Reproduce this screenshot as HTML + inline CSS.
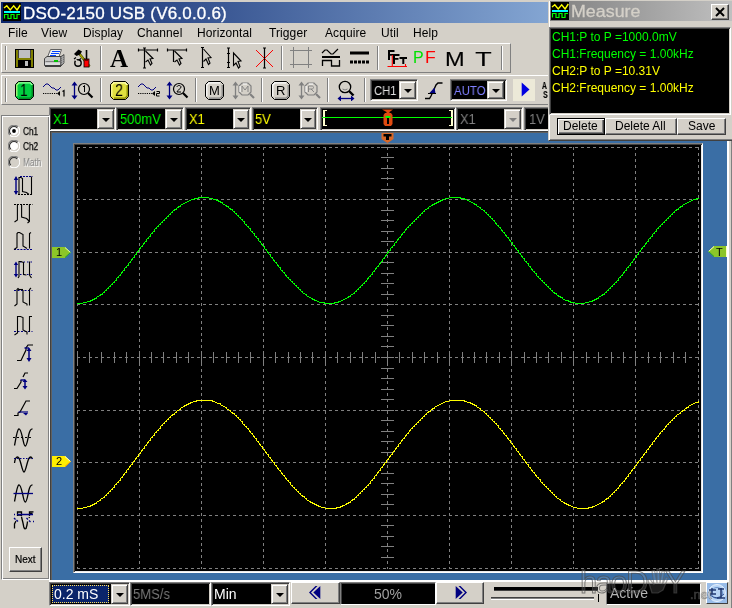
<!DOCTYPE html>
<html><head><meta charset="utf-8">
<style>
*{margin:0;padding:0;box-sizing:border-box}
html,body{width:732px;height:608px;overflow:hidden;background:#d4d0c8;font-family:"Liberation Sans",sans-serif;position:relative}
.a{position:absolute}
.t{position:absolute;white-space:pre;line-height:1;will-change:transform}
.raised{border-top:1px solid #fff;border-left:1px solid #fff;border-right:1px solid #808080;border-bottom:1px solid #808080}
.sunk{border-top:1px solid #808080;border-left:1px solid #808080;border-right:1px solid #fff;border-bottom:1px solid #fff}
.btn{position:absolute;background:#d4d0c8;border-top:1px solid #fff;border-left:1px solid #fff;border-right:1px solid #404040;border-bottom:1px solid #404040;box-shadow:inset -1px -1px 0 #808080}
.combo{position:absolute;background:#000;border-top:1px solid #808080;border-left:1px solid #808080;border-right:1px solid #fff;border-bottom:1px solid #fff;box-shadow:inset 1px 1px 0 #404040,inset -1px -1px 0 #d4d0c8}
.dd{position:absolute;background:#d4d0c8;border-top:1px solid #d4d0c8;border-left:1px solid #d4d0c8;border-right:1px solid #404040;border-bottom:1px solid #404040;box-shadow:inset 1px 1px 0 #fff,inset -1px -1px 0 #808080}
.dd:after{content:"";position:absolute;left:50%;top:50%;margin-left:-4px;margin-top:-1px;border-left:4px solid transparent;border-right:4px solid transparent;border-top:4px solid #000}
.dd.dis:after{border-top-color:#808080}
.sep{position:absolute;width:2px;border-left:1px solid #808080;border-right:1px solid #fff}
.grip{position:absolute;width:2px;border-left:1px solid #808080;border-right:1px solid #fff}
</style></head><body>

<!-- main window title -->
<div class="a" style="left:1px;top:2px;width:731px;height:21px;background:linear-gradient(to right,#0a246a 0px,#a6caf0 702px)"></div>
<svg class="a" style="left:3px;top:3px" width="18" height="18" viewBox="0 0 18 18">
<rect width="18" height="18" fill="#000"/>
<polyline points="1,5 3.8,2.8 7.2,7 10.7,2.8 14.1,7 17.3,2" fill="none" stroke="#ff0" stroke-width="1.4"/>
<rect x="1" y="8" width="16" height="2" fill="#0ff"/>
<polyline points="1.5,15.5 1.5,11.5 5,11.5 5,15.5 8,15.5 8,11.5 11,11.5 11,15.5 14,15.5 14,11.5 17,11.5" fill="none" stroke="#0f0" stroke-width="1.2"/>
</svg>
<div class="t" style="left:23px;top:5px;font-size:17px;letter-spacing:0.2px;color:#fff;-webkit-text-stroke:0.3px #fff">DSO-2150 USB (V6.0.0.6)</div>

<!-- menu -->
<div class="t" style="left:8px;top:27px;font-size:12px;letter-spacing:0.1px">File</div>
<div class="t" style="left:41px;top:27px;font-size:12px;letter-spacing:0.1px">View</div>
<div class="t" style="left:83px;top:27px;font-size:12px;letter-spacing:0.1px">Display</div>
<div class="t" style="left:137px;top:27px;font-size:12px;letter-spacing:0.1px">Channel</div>
<div class="t" style="left:197px;top:27px;font-size:12px;letter-spacing:0.1px">Horizontal</div>
<div class="t" style="left:269px;top:27px;font-size:12px;letter-spacing:0.1px">Trigger</div>
<div class="t" style="left:325px;top:27px;font-size:12px;letter-spacing:0.1px">Acquire</div>
<div class="t" style="left:381px;top:27px;font-size:12px;letter-spacing:0.1px">Util</div>
<div class="t" style="left:413px;top:27px;font-size:12px;letter-spacing:0.1px">Help</div>

<!-- toolbar 1 -->
<div class="a raised" style="left:1px;top:43px;width:510px;height:30px"></div>
<div class="grip" style="left:5px;top:46px;height:24px"></div>
<!-- floppy -->
<svg class="a" style="left:15px;top:49px" width="19" height="19" viewBox="0 0 19 19">
<rect x="0.5" y="0.5" width="18" height="18" fill="#808000" stroke="#000"/>
<rect x="3" y="1" width="13" height="8" fill="#c0c0c0"/>
<path d="M3.5 1V9M15.5 1V9" stroke="#404040" stroke-width="1"/>
<rect x="3" y="11" width="13" height="7" fill="#000"/>
<rect x="10" y="12" width="3" height="5" fill="#c0c0c0"/>
</svg>
<!-- printer -->
<svg class="a" style="left:44px;top:49px" width="21" height="19" viewBox="0 0 21 19">
<path d="M6.5 0.5H17.5L15 8H3.5Z" fill="#f0f0f0" stroke="#606060"/>
<path d="M8 2.5H16M7 4.5H15M6 6.5H12" stroke="#0040ff" stroke-width="1.2"/>
<path d="M0.5 9.5L3 7.5H17V16.5H0.5Z" fill="#c8c8c8" stroke="#404040"/>
<path d="M17 7.5L20 5.5V14L17 17Z" fill="#909090" stroke="#404040" stroke-width="0.8"/>
<path d="M18 8V15M19 7V14" stroke="#c0c0c0" stroke-dasharray="1 1" stroke-width="0.8"/>
<path d="M1.5 12.5H16" stroke="#808080"/>
<rect x="10" y="11" width="4" height="2" fill="#00c000"/>
<path d="M1 15H16" stroke="#f0f0f0" stroke-width="1"/>
<path d="M1 17.5H17" stroke="#404040" stroke-width="1"/>
</svg>
<!-- tools -->
<svg class="a" style="left:73px;top:48px" width="19" height="20" viewBox="0 0 19 20">
<path d="M5 4L16.5 18.5" stroke="#404000" stroke-width="2.6"/>
<path d="M5 4L16.5 18.5" stroke="#a8a800" stroke-width="1.4"/>
<path d="M1 6L5.5 1.5L9 3.5L7 6.5L3.5 8Z" fill="#000"/>
<circle cx="5" cy="15" r="3.2" fill="none" stroke="#000" stroke-width="1.4"/>
<path d="M2 11L4.5 14" stroke="#d4d0c8" stroke-width="1.6"/>
<path d="M1 11L3 9.5M6 12L8 10.5" stroke="#000" stroke-width="1.2"/>
<path d="M13.5 2V11" stroke="#000" stroke-width="1.6"/>
<rect x="11" y="11" width="5" height="8" fill="#ff0000" stroke="#000" stroke-width="0.8"/>
<path d="M12 12H15" stroke="#000" stroke-width="1"/>
</svg>
<div class="sep" style="left:100px;top:46px;height:24px"></div>
<!-- A -->
<div class="t" style="left:110px;top:46px;font-family:'Liberation Serif',serif;font-weight:bold;font-size:25px">A</div>
<!-- T cursor 1 -->
<svg class="a" style="left:137px;top:47px" width="22" height="22" viewBox="0 0 22 22">
<path d="M1 3H21M1.5 1.5V4.5M20.5 1.5V4.5M7.5 1V21M6 21H9M6 1H9" stroke="#000" stroke-width="1.2" fill="none"/>
<path d="M8.5 4L16 11.5L13 12L15 16.5L13.5 18L11 13L8.5 15" stroke="#000" stroke-width="1.1" fill="none"/>
</svg>
<!-- T cursor 2 -->
<svg class="a" style="left:166px;top:47px" width="22" height="22" viewBox="0 0 22 22">
<path d="M1 3H21M1.5 1.5V4.5M20.5 1.5V4.5M7.5 3V15" stroke="#000" stroke-width="1.2" fill="none"/>
<path d="M8.5 4L16 11.5L13 12L15 16.5L13.5 18L11 13L8.5 15" stroke="#000" stroke-width="1.1" fill="none"/>
</svg>
<!-- cursor 3 -->
<svg class="a" style="left:199px;top:47px" width="16" height="22" viewBox="0 0 16 22">
<path d="M3.5 0.5V20.5M2 0.5H5M2 20.5H5" stroke="#000" stroke-width="1.2" fill="none"/>
<path d="M4.5 2L12 10.5L9 11L11 16L9.5 17.5L7 12L4.5 14.5" stroke="#000" stroke-width="1.1" fill="none"/>
</svg>
<!-- cursor 4 -->
<svg class="a" style="left:225px;top:47px" width="20" height="23" viewBox="0 0 20 23">
<path d="M3.5 1V20.5M2 1H5M2 20.5H5M2 6.5H5M2 15.5H5" stroke="#000" stroke-width="1.2" fill="none"/>
<path d="M8.5 6L16 14L13 14.5L15 19.5L13.5 21L11 16L8.5 18.5Z" stroke="#000" stroke-width="1.1" fill="none"/>
</svg>
<!-- red X -->
<svg class="a" style="left:255px;top:47px" width="20" height="22" viewBox="0 0 20 22">
<path d="M1 3L18 20M18 3L1 20" stroke="#ff0000" stroke-width="1"/>
<path d="M9.5 1V21M8 1H11M8 21H11" stroke="#000" stroke-width="1.2"/>
</svg>
<div class="sep" style="left:281px;top:46px;height:24px"></div>
<!-- grid -->
<svg class="a" style="left:289px;top:47px" width="24" height="22" viewBox="0 0 24 22">
<path d="M1 3.5H23M1 17.5H23M4.5 0V21M19.5 0V21" stroke="#808080" stroke-width="1"/>
</svg>
<!-- wave+square -->
<svg class="a" style="left:321px;top:47px" width="20" height="22" viewBox="0 0 20 22">
<path d="M1 6L4 3H6L10 7H12L17 2" stroke="#000" stroke-width="1.2" fill="none"/>
<path d="M1 10H19" stroke="#000" stroke-width="2"/>
<path d="M1.5 19V13.5H10.5V19H18.5V13" stroke="#000" stroke-width="1.3" fill="none"/>
</svg>
<!-- lines -->
<svg class="a" style="left:349px;top:47px" width="21" height="22" viewBox="0 0 21 22">
<rect x="1" y="4.5" width="19" height="3" fill="#000"/>
<rect x="1" y="13.5" width="3" height="3" fill="#000"/><rect x="5" y="13.5" width="3" height="3" fill="#000"/><rect x="9" y="13.5" width="3" height="3" fill="#000"/><rect x="13" y="13.5" width="3" height="3" fill="#000"/><rect x="17" y="13.5" width="3" height="3" fill="#000"/>
</svg>
<div class="sep" style="left:377px;top:46px;height:24px"></div>
<!-- FFT -->
<svg class="a" style="left:386px;top:47px" width="22" height="22" viewBox="0 0 22 22">
<path d="M2 3H8.5V5H4V7H7.5V8.8H4V13H2Z" fill="#000"/>
<path d="M7 7H13.5V9H9V11H12.5V12.8H9V17H7Z" fill="#000"/>
<path d="M13.5 10H21V12H18.3V17H16.3V12H13.5Z" fill="#000"/>
<path d="M1.5 19.5H21M6.3 8V19.5M19.5 17V19.5" stroke="#ff0000" stroke-width="1.1"/>
</svg>
<div class="t" style="left:413px;top:50px;font-size:16px;color:#00e000">P</div>
<div class="t" style="left:425px;top:50px;font-size:16px;color:#ff0000;transform:scaleX(1.1);transform-origin:0 0">F</div>
<div class="t" style="left:445px;top:49px;font-size:20px;-webkit-text-stroke:0.15px #000;transform:scaleX(1.18);transform-origin:0 0">M</div>
<div class="t" style="left:475px;top:49px;font-size:20px;transform:scaleX(1.38);transform-origin:0 0">T</div>
<div class="sep" style="left:501px;top:46px;height:24px"></div>

<!-- toolbar 2 -->
<div class="a raised" style="left:1px;top:75px;width:731px;height:30px"></div>
<div class="grip" style="left:5px;top:78px;height:24px"></div>
<!-- 1 green -->
<svg class="a" style="left:15px;top:81px" width="20" height="20" viewBox="0 0 20 20">
<path d="M3.5 0.5H15.5L18.5 3.5V15.5L15.5 18.5H3.5L0.5 15.5V3.5Z" fill="#00d040" stroke="#000"/>
<path d="M3.5 1.8H15L17.2 4" stroke="#a0ffa0" stroke-width="1.2" fill="none"/>
<path d="M1.8 15V4L4 1.8" stroke="#c0ff80" stroke-width="1.2" fill="none"/>
<path d="M17.2 4V15L15 17.2H4" stroke="#008020" stroke-width="1.2" fill="none"/>
</svg>
<div class="t" style="left:20px;top:83px;font-size:16px;transform:scaleX(0.85);transform-origin:0 0">1</div>
<!-- wave1 -->
<svg class="a" style="left:42px;top:82px" width="24" height="16" viewBox="0 0 24 16">
<path d="M1 5L4 2H6L10 6H12L14 8H16L19 5" stroke="#000080" stroke-width="1" fill="none"/>
<path d="M1 11.5H15" stroke="#000" stroke-dasharray="1.2 1" stroke-width="1"/>
<path d="M15 11.5L18 9V14Z" fill="#000"/>
<path d="M20.5 9.5L22 8.5V14.5" stroke="#000" stroke-width="1.2" fill="none"/>
</svg>
<!-- zoom1 -->
<svg class="a" style="left:71px;top:81px" width="24" height="20" viewBox="0 0 24 20">
<path d="M3.5 2V17" stroke="#000080" stroke-width="1.3"/>
<path d="M0.5 4.5L3.5 0.5L6.5 4.5ZM0.5 14.5L3.5 18.5L6.5 14.5Z" fill="#000080"/>
<circle cx="13" cy="8" r="5.5" fill="none" stroke="#000" stroke-width="1.2"/>
<path d="M17 12L21.5 16.5" stroke="#000" stroke-width="2.2"/>
<path d="M12 6L13.5 4.5V11" stroke="#000" stroke-width="1" fill="none"/>
</svg>
<div class="sep" style="left:100px;top:78px;height:24px"></div>
<!-- 2 yellow -->
<svg class="a" style="left:110px;top:81px" width="20" height="20" viewBox="0 0 20 20">
<path d="M3.5 0.5H15.5L18.5 3.5V15.5L15.5 18.5H3.5L0.5 15.5V3.5Z" fill="#e0e040" stroke="#000"/>
<path d="M3.5 1.8H15L17.2 4" stroke="#ffffc0" stroke-width="1.2" fill="none"/>
<path d="M1.8 15V4L4 1.8" stroke="#ffffa0" stroke-width="1.2" fill="none"/>
<path d="M17.2 4V15L15 17.2H4" stroke="#808000" stroke-width="1.2" fill="none"/>
</svg>
<div class="t" style="left:115px;top:83px;font-size:16px;transform:scaleX(0.9);transform-origin:0 0">2</div>
<!-- wave2 -->
<svg class="a" style="left:137px;top:82px" width="24" height="16" viewBox="0 0 24 16">
<path d="M1 5L4 2H6L10 6H12L14 8H16L19 5" stroke="#000080" stroke-width="1" fill="none"/>
<path d="M1 11.5H15" stroke="#000" stroke-dasharray="1.2 1" stroke-width="1"/>
<path d="M15 11.5L18 9V14Z" fill="#000"/>
<path d="M19.5 9.5H22.5V11.5H19.5V14H22.5" stroke="#000" stroke-width="1" fill="none"/>
</svg>
<!-- zoom2 -->
<svg class="a" style="left:166px;top:81px" width="24" height="20" viewBox="0 0 24 20">
<path d="M3.5 2V17" stroke="#000080" stroke-width="1.3"/>
<path d="M0.5 4.5L3.5 0.5L6.5 4.5ZM0.5 14.5L3.5 18.5L6.5 14.5Z" fill="#000080"/>
<circle cx="13" cy="8" r="5.5" fill="none" stroke="#000" stroke-width="1.2"/>
<path d="M17 12L21.5 16.5" stroke="#000" stroke-width="2.2"/>
<path d="M11 6C11 4 15 4 15 6C15 8 11 9 11 11H15" stroke="#000" stroke-width="1" fill="none"/>
</svg>
<div class="sep" style="left:195px;top:78px;height:24px"></div>
<!-- M button -->
<svg class="a" style="left:205px;top:81px" width="20" height="20" viewBox="0 0 20 20">
<path d="M3.5 0.5H15.5L18.5 3.5V15.5L15.5 18.5H3.5L0.5 15.5V3.5Z" fill="#d4d0c8" stroke="#000"/>
<path d="M3.5 1.8H15M1.8 15V4L4 1.8" stroke="#fff" stroke-width="1.2" fill="none"/>
<path d="M17.2 4V15L15 17.2H4" stroke="#808080" stroke-width="1.2" fill="none"/>
</svg>
<div class="t" style="left:209px;top:84px;font-size:13px">M</div>
<!-- M zoom -->
<svg class="a" style="left:232px;top:81px" width="24" height="20" viewBox="0 0 24 20">
<path d="M3.5 2V17" stroke="#808080" stroke-width="1.3"/>
<path d="M0.5 4.5L3.5 0.5L6.5 4.5ZM0.5 14.5L3.5 18.5L6.5 14.5Z" fill="#808080"/>
<path d="M10 2H16L19 5V11L16 14H10L7 11V5Z" fill="none" stroke="#808080" stroke-width="1.2"/>
<path d="M11 3H15M8 11V5" stroke="#fff" stroke-width="1"/>
<path d="M18 13L22 17" stroke="#808080" stroke-width="2.2"/>
<path d="M10 11V5L13 9L16 5V11" stroke="#808080" stroke-width="0.9" fill="none"/>
</svg>
<div class="sep" style="left:261px;top:78px;height:24px"></div>
<!-- R button -->
<svg class="a" style="left:271px;top:81px" width="20" height="20" viewBox="0 0 20 20">
<path d="M3.5 0.5H15.5L18.5 3.5V15.5L15.5 18.5H3.5L0.5 15.5V3.5Z" fill="#d4d0c8" stroke="#000"/>
<path d="M3.5 1.8H15M1.8 15V4L4 1.8" stroke="#fff" stroke-width="1.2" fill="none"/>
<path d="M17.2 4V15L15 17.2H4" stroke="#808080" stroke-width="1.2" fill="none"/>
</svg>
<div class="t" style="left:276px;top:84px;font-size:13px">R</div>
<!-- R zoom -->
<svg class="a" style="left:298px;top:81px" width="24" height="20" viewBox="0 0 24 20">
<path d="M3.5 2V17" stroke="#808080" stroke-width="1.3"/>
<path d="M0.5 4.5L3.5 0.5L6.5 4.5ZM0.5 14.5L3.5 18.5L6.5 14.5Z" fill="#808080"/>
<path d="M10 2H16L19 5V11L16 14H10L7 11V5Z" fill="none" stroke="#808080" stroke-width="1.2"/>
<path d="M11 3H15M8 11V5" stroke="#fff" stroke-width="1"/>
<path d="M18 13L22 17" stroke="#808080" stroke-width="2.2"/>
<path d="M10.5 11V5H14C16 5 16 8 14 8H10.5M13 8L16 11" stroke="#808080" stroke-width="0.9" fill="none"/>
</svg>
<div class="sep" style="left:327px;top:78px;height:24px"></div>
<!-- magnifier -->
<svg class="a" style="left:337px;top:80px" width="19" height="21" viewBox="0 0 19 21">
<circle cx="8" cy="7" r="5.7" fill="none" stroke="#000" stroke-width="1.3"/>
<path d="M5.5 9Q8 11 10.5 9" stroke="#808080" fill="none"/>
<path d="M12 11L16.5 15.5" stroke="#000" stroke-width="2.4"/>
<path d="M3 18.5H15" stroke="#000080" stroke-width="1.3"/>
<path d="M0.5 18.5L4 15.5V21.5ZM17.5 18.5L14 15.5V21.5Z" fill="#000080"/>
</svg>
<div class="sep" style="left:364px;top:78px;height:24px"></div>
<!-- CH1 combo -->
<div class="combo" style="left:370px;top:79px;width:48px;height:22px"></div>
<div class="dd" style="left:399px;top:81px;width:17px;height:18px"></div>
<div class="t" style="left:374px;top:84px;font-size:13px;color:#e0e0e0;transform:scaleX(0.86);transform-origin:0 0">CH1</div>
<!-- slope -->
<svg class="a" style="left:424px;top:81px" width="20" height="20" viewBox="0 0 20 20">
<path d="M1 17.5H5.5L7 15L12 4L14 2H18.5" stroke="#000" stroke-width="1.4" fill="none"/>
<path d="M5 12.5L10.5 6.5L11.5 12.5Z" fill="#000080"/>
<path d="M4 12.5H12" stroke="#000" stroke-width="1"/>
</svg>
<!-- AUTO combo -->
<div class="combo" style="left:450px;top:79px;width:57px;height:22px"></div>
<div class="dd" style="left:487px;top:81px;width:17px;height:18px"></div>
<div class="t" style="left:454px;top:84px;font-size:13px;color:#8080ff;transform:scaleX(0.88);transform-origin:0 0">AUTO</div>
<!-- play -->
<div class="a" style="left:513px;top:79px;width:22px;height:22px;background:#ece9d8"></div>
<svg class="a" style="left:521px;top:82px" width="10" height="16" viewBox="0 0 10 16"><path d="M0.7 0.5L8.5 7.5L0.7 14.5Z" fill="#0000e0"/></svg>
<div class="t" style="left:542px;top:82px;font-size:10px;font-weight:bold;font-family:'Liberation Mono',monospace;transform:scaleX(0.8);transform-origin:0 0">A</div>
<div class="t" style="left:543px;top:91px;font-size:10px;font-weight:bold;font-family:'Liberation Mono',monospace;transform:scaleX(0.8);transform-origin:0 0">S</div>


<!-- combos row -->
<div class="combo" style="left:49px;top:107px;width:67px;height:24px"></div>
<div class="dd" style="left:97px;top:109px;width:17px;height:20px"></div>
<div class="t" style="left:53px;top:112px;font-size:14px;color:#00ff00;transform:scaleX(0.92);transform-origin:0 0">X1</div>
<div class="combo" style="left:116px;top:107px;width:68px;height:24px"></div>
<div class="dd" style="left:165px;top:109px;width:17px;height:20px"></div>
<div class="t" style="left:120px;top:112px;font-size:14px;color:#00ff00;transform:scaleX(0.92);transform-origin:0 0">500mV</div>
<div class="combo" style="left:185px;top:107px;width:66px;height:24px"></div>
<div class="dd" style="left:233px;top:109px;width:16px;height:20px"></div>
<div class="t" style="left:189px;top:112px;font-size:14px;color:#ffff00;transform:scaleX(0.92);transform-origin:0 0">X1</div>
<div class="combo" style="left:252px;top:107px;width:66px;height:24px"></div>
<div class="dd" style="left:300px;top:109px;width:16px;height:20px"></div>
<div class="t" style="left:255px;top:112px;font-size:14px;color:#ffff00;transform:scaleX(0.92);transform-origin:0 0">5V</div>
<div class="combo" style="left:320px;top:107px;width:136px;height:24px"></div>
<div class="a" style="left:323px;top:110px;width:4px;height:16px;border-left:2px solid #ffffd0;border-top:1px solid #ffffd0;border-bottom:1px solid #ffffd0"></div>
<div class="a" style="left:449px;top:110px;width:4px;height:16px;border-right:2px solid #ffffd0;border-top:1px solid #ffffd0;border-bottom:1px solid #ffffd0"></div>
<div class="a" style="left:322px;top:117px;width:130px;height:1px;background:#00ff00"></div>
<svg class="a" style="left:382px;top:109px" width="12" height="18" viewBox="0 0 12 18">
<path d="M0 0.5H11L7.5 3V4H4.5V3Z" fill="#e04a10"/>
<path d="M3 4H9L10.5 6V15L9 17H3L1.5 15V6Z" fill="#e04a10"/>
<rect x="5" y="7" width="2" height="8" fill="#000"/>
<rect x="3.5" y="7" width="5" height="2" fill="#00ff00"/>
</svg>

<div class="combo" style="left:456px;top:107px;width:67px;height:24px"></div>
<div class="dd dis" style="left:504px;top:109px;width:17px;height:20px"></div>
<div class="t" style="left:460px;top:112px;font-size:14px;color:#808080;transform:scaleX(0.92);transform-origin:0 0">X1</div>
<div class="combo" style="left:524px;top:107px;width:40px;height:24px"></div>
<div class="t" style="left:529px;top:112px;font-size:14px;color:#808080;transform:scaleX(0.92);transform-origin:0 0">1V</div>

<!-- left panel -->
<div class="a" style="left:1px;top:115px;width:49px;height:465px;border-top:1px solid #808080;border-left:1px solid #808080;border-right:1px solid #fff;border-bottom:1px solid #fff;box-shadow:inset 1px 1px 0 #fff,inset -1px -1px 0 #808080"></div>
<!-- radios -->
<svg class="a" style="left:8px;top:125px" width="12" height="12" viewBox="0 0 12 12">
<circle cx="6" cy="6" r="4.6" fill="#fff"/>
<path d="M10.1 1.9A5.5 5.5 0 0 0 1.9 10.1" stroke="#808080" fill="none" stroke-width="1.1"/>
<path d="M1.9 10.1A5.5 5.5 0 0 0 10.1 1.9" stroke="#fff" fill="none" stroke-width="1.1"/>
<path d="M9.2 2.8A4.5 4.5 0 0 0 2.8 9.2" stroke="#303030" fill="none" stroke-width="1.1"/>
<path d="M2.8 9.2A4.5 4.5 0 0 0 9.2 2.8" stroke="#d4d0c8" fill="none" stroke-width="1.1"/>
<circle cx="6" cy="6" r="1.9" fill="#000"/></svg>
<div class="t" style="left:23px;top:127px;font-size:10px;-webkit-text-stroke:0.25px #000;transform:scaleX(0.82);transform-origin:0 0">Ch1</div>
<svg class="a" style="left:8px;top:140px" width="12" height="12" viewBox="0 0 12 12">
<circle cx="6" cy="6" r="4.6" fill="#fff"/>
<path d="M10.1 1.9A5.5 5.5 0 0 0 1.9 10.1" stroke="#808080" fill="none" stroke-width="1.1"/>
<path d="M1.9 10.1A5.5 5.5 0 0 0 10.1 1.9" stroke="#fff" fill="none" stroke-width="1.1"/>
<path d="M9.2 2.8A4.5 4.5 0 0 0 2.8 9.2" stroke="#303030" fill="none" stroke-width="1.1"/>
<path d="M2.8 9.2A4.5 4.5 0 0 0 9.2 2.8" stroke="#d4d0c8" fill="none" stroke-width="1.1"/>
</svg>
<div class="t" style="left:23px;top:142px;font-size:10px;-webkit-text-stroke:0.25px #000;transform:scaleX(0.82);transform-origin:0 0">Ch2</div>
<svg class="a" style="left:8px;top:156px" width="12" height="12" viewBox="0 0 12 12">
<circle cx="6" cy="6" r="4.6" fill="#d4d0c8"/>
<path d="M10.1 1.9A5.5 5.5 0 0 0 1.9 10.1" stroke="#808080" fill="none" stroke-width="1.1"/>
<path d="M1.9 10.1A5.5 5.5 0 0 0 10.1 1.9" stroke="#fff" fill="none" stroke-width="1.1"/>
<path d="M9.2 2.8A4.5 4.5 0 0 0 2.8 9.2" stroke="#303030" fill="none" stroke-width="1.1"/>
<path d="M2.8 9.2A4.5 4.5 0 0 0 9.2 2.8" stroke="#d4d0c8" fill="none" stroke-width="1.1"/>
</svg>
<div class="t" style="left:24px;top:159px;font-size:10px;color:#fff;transform:scaleX(0.82);transform-origin:0 0">Math</div>
<div class="t" style="left:23px;top:158px;font-size:10px;color:#808080;transform:scaleX(0.82);transform-origin:0 0">Math</div>
<svg class="a" style="left:13px;top:175px" width="22" height="360" viewBox="0 0 22 360" fill="none" stroke-width="1.2">
<!-- 1 y=1 -->
<g transform="translate(0,1)">
<path d="M3 1.5V17.5" stroke="#000080" stroke-width="1.4"/><path d="M0.8 4L3 0L5.2 4ZM0.8 15L3 19L5.2 15Z" fill="#000080" stroke="none"/>
<path d="M7 0.5H19.5" stroke="#000080" stroke-dasharray="2 1"/>
<path d="M5 18.5H19.5" stroke="#000" stroke-dasharray="2 1"/>
<path d="M6 18V1.5H8L9.5 2.5V15.5L13.5 16.5L16 18.5M18.5 0.5V18.5" stroke="#000" stroke-width="1.1"/>
</g>
<!-- 2 y=29 -->
<g transform="translate(0,29)">
<path d="M1 0.5H19.5" stroke="#000" stroke-dasharray="2 1"/>
<path d="M1.5 18L4.4 16V0.5M8.6 0.5V13L13.6 14.5L16 17M16.4 0.5V17.5L14.5 19" stroke="#000" stroke-width="1.1"/>
</g>
<!-- 3 y=57 -->
<g transform="translate(0,57)">
<path d="M1 17.5H19.5" stroke="#000080" stroke-dasharray="2 1.2"/>
<path d="M1 17.5L4 15.5V1.5L5 0.5H6.5L10 2.5V14L14 16.5M16.5 16.5V1.5L18 0.5" stroke="#000" stroke-width="1.1"/>
</g>
<!-- 4 y=85 -->
<g transform="translate(0,85)">
<path d="M3 3V16" stroke="#000080" stroke-width="1.4"/><path d="M0.8 5L3 1.5L5.2 5ZM0.8 14L3 17.5L5.2 14Z" fill="#000080" stroke="none"/>
<path d="M7 2H19.5M7 14.5H19.5" stroke="#000080" stroke-dasharray="1.5 2"/>
<path d="M5 18L6 16.5V1.5H8L10.5 2.5V14.5L13.5 15M16.5 1.5V15L18.5 18" stroke="#000" stroke-width="1.1"/>
</g>
<!-- 5 y=113 -->
<g transform="translate(0,113)">
<path d="M1 2.5H19.5" stroke="#000080" stroke-dasharray="2 1.5"/>
<path d="M1.5 18L4 16V1.5L5 0.5L6 1.5V2M10 2V14L14 16V17.5M16.5 17.5V1.5L18 0" stroke="#000" stroke-width="1.1"/>
<path d="M5.5 1.5H10" stroke="#000" stroke-width="1.1"/>
</g>
<!-- 6 y=141 -->
<g transform="translate(0,141)">
<path d="M1 15.5H19.5" stroke="#000080" stroke-dasharray="2 1.5"/>
<path d="M1.5 19L4.5 17V0.5H7.5L10 1.5V14L14 16V18.5M16.5 16V0.5H19" stroke="#000" stroke-width="1.1"/>
</g>
<!-- 7 slope arrow y=169 -->
<g transform="translate(0,169)">
<path d="M4 16.5H8L13 6V4L15 1H20" stroke="#000"/>
<path d="M11.5 4H16" stroke="#000080" stroke-width="1.4"/>
<path d="M16 4.5V16" stroke="#000080" stroke-width="1.5"/><path d="M13.5 7L16 3.5L18.5 7ZM13.5 14L16 18L18.5 14Z" fill="#000080" stroke="none"/>
</g>
<!-- 8 y=196 -->
<g transform="translate(0,196)">
<path d="M1 17.5H4L8 11V9M10 6L12 2H15" stroke="#000"/>
<path d="M7.5 9H12" stroke="#000080" stroke-width="1.4"/>
<path d="M12 10V16" stroke="#000080" stroke-width="1.5"/><path d="M9.5 11L12 8L14.5 11ZM9.5 15L12 18.5L14.5 15Z" fill="#000080" stroke="none"/>
</g>
<!-- 9 y=224 -->
<g transform="translate(0,224)">
<path d="M1 16.5H5V14L7 13L13 2H17" stroke="#000"/>
<path d="M5.5 13H15" stroke="#000080" stroke-width="1.2"/>
<path d="M10 14L13 16.5L15 14Z" fill="#000080" stroke="none"/>
</g>
<!-- 10 y=253 sine with black line -->
<g transform="translate(0,253)">
<path d="M1.5 17.5C2.5 13 4 1.5 5.8 0.8C7.5 0.5 8.5 5 9.5 9.5C10.5 14 11 18 12.3 18C13.8 18 14.8 11 15.8 6.5C16.8 2 17.5 0.8 19.5 0.8" stroke="#000" stroke-width="1.3"/>
<path d="M0 9.5H20" stroke="#000" stroke-dasharray="2 2" stroke-width="1"/>
</g>
<!-- 11 y=281 V -->
<g transform="translate(0,281)">
<path d="M1.5 7C2 3 3 1 4.5 1C6 1 7 4 8 8C9 12 10 16 11 16C12 16 13 12 14 8C15 4 16 1 17.5 1C18.5 1 19 2 19.5 3" stroke="#000" stroke-width="1.3"/>
<path d="M1 2.5H20" stroke="#000080" stroke-dasharray="1.5 1.5"/>
</g>
<!-- 12 y=309 sine with blue line -->
<g transform="translate(0,309)">
<path d="M1.5 17.5C2.5 13 4 1.5 5.8 0.8C7.5 0.5 8.5 5 9.5 9.5C10.5 14 11 18 12.3 18C13.8 18 14.8 11 15.8 6.5C16.8 2 17.5 0.8 19.5 0.8" stroke="#000" stroke-width="1.3"/>
<path d="M0.5 9.5H20" stroke="#000080" stroke-width="1.3"/>
</g>
<!-- 13 y=337 R-F -->
<g transform="translate(0,336)">
<path d="M4.5 5V1H8.5V4H4.5M7 4L9 5" stroke="#000" stroke-width="1.3"/>
<path d="M16.5 5V0.8H20.5M16.5 2.5H19.5" stroke="#000" stroke-width="1.3"/>
<path d="M1 3.5H2M4 3.5H20" stroke="#000080" stroke-width="1.3"/>
<path d="M1.5 17.5V13L3 10M8.5 6L10 12L10.8 16Q11.5 18.5 13 17.5L14 14L14.5 10.5M16 7L16.5 6" stroke="#000" stroke-width="1.3"/>
<path d="M1 7L2.5 8.5M3.5 9L5 10.5M13.5 7L15 8.5M16 9.5L17.5 11M20 10.5H21" stroke="#000080" stroke-width="1.3"/>
</g>
</svg>
<!-- Next button -->
<div class="btn" style="left:9px;top:547px;width:33px;height:25px"></div>
<div class="t" style="left:15px;top:555px;font-size:10px;-webkit-text-stroke:0.2px #000">Next</div>


<!-- scope frame -->
<div class="a" style="left:49px;top:130px;width:680px;height:452px;background:#3a6ea5;border-top:1px solid #fff;border-left:1px solid #fff;border-right:2px solid #fff;border-bottom:2px solid #fff;box-shadow:inset 1px 1px 0 #404040,inset 2px 2px 0 #606060"></div>
<div class="a sunk" style="left:73px;top:143px;width:630px;height:430px;background:#000;box-shadow:inset 1px 1px 0 #404040,inset -1px -1px 0 #e8e8e8"></div>
<div class="a" style="left:731px;top:105px;width:1px;height:503px;background:#808080"></div>
<!-- ch1 marker -->
<svg class="a" style="left:52px;top:247px" width="20" height="11" viewBox="0 0 20 11">
<path d="M0 0H13L19 5.5L13 11H0Z" fill="#8cc628"/>
<path d="M13 0.5L18.5 5.5" stroke="#e8ffb0"/>
<path d="M13 10.5L18.5 5.5" stroke="#1a9a3a"/>
</svg>
<div class="t" style="left:56px;top:247px;font-size:11px">1</div>
<!-- ch2 marker -->
<svg class="a" style="left:52px;top:456px" width="20" height="11" viewBox="0 0 20 11">
<path d="M0 0H13L19 5.5L13 11H0Z" fill="#ffee00"/>
<path d="M13 0.5L18.5 5.5" stroke="#ffffe0"/>
<path d="M13 10.5L18.5 5.5" stroke="#ff9900"/>
</svg>
<div class="t" style="left:56px;top:456px;font-size:11px">2</div>
<!-- T marker right -->
<svg class="a" style="left:707px;top:246px" width="20" height="11" viewBox="0 0 20 11">
<path d="M20 0H7L1 5.5L7 11H20Z" fill="#8cc628"/>
<path d="M7 0.5L1.5 5.5" stroke="#ffffc0"/>
<path d="M7 10.5L1.5 5.5" stroke="#1a9a3a"/>
<path d="M19.5 0V11" stroke="#ffffc0"/>
</svg>
<div class="t" style="left:716px;top:247px;font-size:11px">T</div>
<!-- trigger top marker in blue -->
<svg class="a" style="left:381px;top:133px" width="13" height="10" viewBox="0 0 13 10">
<path d="M0.5 0H12.5V6L9 8.5L6.5 10L4 8.5L0.5 6Z" fill="#d86828"/>
<path d="M2.5 1H10.5V3.5H8V7H5V3.5H2.5Z" fill="#000"/>
</svg>

<svg class="a" style="left:0;top:0" width="732" height="608">
<line x1="77.5" y1="147" x2="77.5" y2="569" stroke="#808080" stroke-width="1" stroke-dasharray="3 3"/>
<line x1="139.5" y1="147" x2="139.5" y2="569" stroke="#808080" stroke-width="1" stroke-dasharray="3 3"/>
<line x1="201.5" y1="147" x2="201.5" y2="569" stroke="#808080" stroke-width="1" stroke-dasharray="3 3"/>
<line x1="263.5" y1="147" x2="263.5" y2="569" stroke="#808080" stroke-width="1" stroke-dasharray="3 3"/>
<line x1="325.5" y1="147" x2="325.5" y2="569" stroke="#808080" stroke-width="1" stroke-dasharray="3 3"/>
<line x1="387.5" y1="147" x2="387.5" y2="569" stroke="#808080" stroke-width="1" stroke-dasharray="3 3"/>
<line x1="449.5" y1="147" x2="449.5" y2="569" stroke="#808080" stroke-width="1" stroke-dasharray="3 3"/>
<line x1="511.5" y1="147" x2="511.5" y2="569" stroke="#808080" stroke-width="1" stroke-dasharray="3 3"/>
<line x1="573.5" y1="147" x2="573.5" y2="569" stroke="#808080" stroke-width="1" stroke-dasharray="3 3"/>
<line x1="635.5" y1="147" x2="635.5" y2="569" stroke="#808080" stroke-width="1" stroke-dasharray="3 3"/>
<line x1="698.5" y1="147" x2="698.5" y2="569" stroke="#808080" stroke-width="1" stroke-dasharray="3 3"/>
<line x1="77" y1="147.5" x2="699" y2="147.5" stroke="#808080" stroke-width="1" stroke-dasharray="3 3"/>
<line x1="77" y1="199.5" x2="699" y2="199.5" stroke="#808080" stroke-width="1" stroke-dasharray="3 3"/>
<line x1="77" y1="252.5" x2="699" y2="252.5" stroke="#808080" stroke-width="1" stroke-dasharray="3 3"/>
<line x1="77" y1="304.5" x2="699" y2="304.5" stroke="#808080" stroke-width="1" stroke-dasharray="3 3"/>
<line x1="77" y1="357.5" x2="699" y2="357.5" stroke="#808080" stroke-width="1" stroke-dasharray="3 3"/>
<line x1="77" y1="410.5" x2="699" y2="410.5" stroke="#808080" stroke-width="1" stroke-dasharray="3 3"/>
<line x1="77" y1="462.5" x2="699" y2="462.5" stroke="#808080" stroke-width="1" stroke-dasharray="3 3"/>
<line x1="77" y1="515.5" x2="699" y2="515.5" stroke="#808080" stroke-width="1" stroke-dasharray="3 3"/>
<line x1="77" y1="568.5" x2="699" y2="568.5" stroke="#808080" stroke-width="1" stroke-dasharray="3 3"/>
<path fill="#808080" d="M77 352h1v11h-1zM89 352h1v11h-1zM101 352h1v11h-1zM114 352h1v11h-1zM126 352h1v11h-1zM139 352h1v11h-1zM151 352h1v11h-1zM163 352h1v11h-1zM176 352h1v11h-1zM188 352h1v11h-1zM201 352h1v11h-1zM213 352h1v11h-1zM226 352h1v11h-1zM238 352h1v11h-1zM250 352h1v11h-1zM263 352h1v11h-1zM275 352h1v11h-1zM288 352h1v11h-1zM300 352h1v11h-1zM312 352h1v11h-1zM325 352h1v11h-1zM337 352h1v11h-1zM350 352h1v11h-1zM362 352h1v11h-1zM375 352h1v11h-1zM387 352h1v11h-1zM399 352h1v11h-1zM412 352h1v11h-1zM424 352h1v11h-1zM437 352h1v11h-1zM449 352h1v11h-1zM462 352h1v11h-1zM474 352h1v11h-1zM486 352h1v11h-1zM499 352h1v11h-1zM511 352h1v11h-1zM524 352h1v11h-1zM536 352h1v11h-1zM548 352h1v11h-1zM561 352h1v11h-1zM573 352h1v11h-1zM586 352h1v11h-1zM598 352h1v11h-1zM611 352h1v11h-1zM623 352h1v11h-1zM635 352h1v11h-1zM648 352h1v11h-1zM660 352h1v11h-1zM673 352h1v11h-1zM685 352h1v11h-1zM381 147h13v1h-13zM381 157h13v1h-13zM381 168h13v1h-13zM381 178h13v1h-13zM381 189h13v1h-13zM381 199h13v1h-13zM381 210h13v1h-13zM381 220h13v1h-13zM381 231h13v1h-13zM381 241h13v1h-13zM381 252h13v1h-13zM381 262h13v1h-13zM381 273h13v1h-13zM381 283h13v1h-13zM381 294h13v1h-13zM381 304h13v1h-13zM381 315h13v1h-13zM381 325h13v1h-13zM381 336h13v1h-13zM381 346h13v1h-13zM381 357h13v1h-13zM381 368h13v1h-13zM381 378h13v1h-13zM381 389h13v1h-13zM381 399h13v1h-13zM381 410h13v1h-13zM381 420h13v1h-13zM381 431h13v1h-13zM381 441h13v1h-13zM381 452h13v1h-13zM381 462h13v1h-13zM381 473h13v1h-13zM381 483h13v1h-13zM381 494h13v1h-13zM381 504h13v1h-13zM381 515h13v1h-13zM381 525h13v1h-13zM381 536h13v1h-13zM381 546h13v1h-13zM381 557h13v1h-13z"/>
<path fill="#00ff00" d="M77 303h1v1h-1zM78 303h1v1h-1zM79 303h1v1h-1zM80 303h1v1h-1zM81 303h1v1h-1zM82 303h1v1h-1zM83 302h1v1h-1zM84 302h1v1h-1zM85 302h1v1h-1zM86 302h1v1h-1zM87 301h1v1h-1zM88 301h1v1h-1zM89 301h1v1h-1zM90 300h1v2h-1zM91 300h1v1h-1zM92 299h1v2h-1zM93 299h1v1h-1zM94 298h1v2h-1zM95 298h1v1h-1zM96 297h1v2h-1zM97 296h1v1h-1zM98 296h1v1h-1zM99 295h1v1h-1zM100 294h1v2h-1zM101 294h1v1h-1zM102 293h1v2h-1zM103 292h1v1h-1zM104 291h1v2h-1zM105 290h1v1h-1zM106 289h1v2h-1zM107 288h1v1h-1zM108 287h1v2h-1zM109 286h1v1h-1zM110 285h1v2h-1zM111 284h1v1h-1zM112 283h1v2h-1zM113 282h1v1h-1zM114 281h1v2h-1zM115 280h1v1h-1zM116 278h1v3h-1zM117 277h1v1h-1zM118 276h1v2h-1zM119 275h1v1h-1zM120 274h1v2h-1zM121 272h1v2h-1zM122 271h1v2h-1zM123 270h1v1h-1zM124 268h1v3h-1zM125 267h1v1h-1zM126 266h1v2h-1zM127 265h1v1h-1zM128 263h1v3h-1zM129 262h1v1h-1zM130 261h1v2h-1zM131 259h1v2h-1zM132 258h1v2h-1zM133 257h1v1h-1zM134 255h1v3h-1zM135 254h1v1h-1zM136 252h1v3h-1zM137 251h1v1h-1zM138 250h1v2h-1zM139 248h1v2h-1zM140 247h1v2h-1zM141 246h1v1h-1zM142 245h1v2h-1zM143 243h1v2h-1zM144 242h1v2h-1zM145 241h1v1h-1zM146 239h1v3h-1zM147 238h1v1h-1zM148 237h1v2h-1zM149 236h1v1h-1zM150 234h1v3h-1zM151 233h1v1h-1zM152 232h1v2h-1zM153 231h1v1h-1zM154 229h1v3h-1zM155 228h1v1h-1zM156 227h1v2h-1zM157 226h1v1h-1zM158 225h1v2h-1zM159 224h1v1h-1zM160 223h1v2h-1zM161 222h1v1h-1zM162 221h1v2h-1zM163 220h1v1h-1zM164 219h1v2h-1zM165 218h1v1h-1zM166 217h1v2h-1zM167 216h1v1h-1zM168 215h1v2h-1zM169 214h1v1h-1zM170 213h1v2h-1zM171 212h1v1h-1zM172 211h1v2h-1zM173 210h1v1h-1zM174 209h1v2h-1zM175 209h1v1h-1zM176 208h1v2h-1zM177 207h1v1h-1zM178 206h1v2h-1zM179 206h1v1h-1zM180 205h1v2h-1zM181 204h1v1h-1zM182 204h1v1h-1zM183 203h1v1h-1zM184 203h1v1h-1zM185 202h1v1h-1zM186 202h1v1h-1zM187 201h1v1h-1zM188 201h1v1h-1zM189 200h1v1h-1zM190 200h1v1h-1zM191 199h1v1h-1zM192 199h1v1h-1zM193 199h1v1h-1zM194 198h1v2h-1zM195 198h1v1h-1zM196 198h1v1h-1zM197 198h1v1h-1zM198 197h1v2h-1zM199 197h1v1h-1zM200 197h1v1h-1zM201 197h1v1h-1zM202 197h1v1h-1zM203 197h1v1h-1zM204 197h1v1h-1zM205 197h1v1h-1zM206 197h1v1h-1zM207 197h1v1h-1zM208 197h1v1h-1zM209 198h1v1h-1zM210 198h1v1h-1zM211 198h1v1h-1zM212 198h1v1h-1zM213 199h1v1h-1zM214 199h1v1h-1zM215 199h1v1h-1zM216 199h1v2h-1zM217 200h1v1h-1zM218 200h1v2h-1zM219 201h1v1h-1zM220 201h1v2h-1zM221 202h1v1h-1zM222 202h1v2h-1zM223 204h1v1h-1zM224 204h1v1h-1zM225 205h1v1h-1zM226 205h1v2h-1zM227 206h1v1h-1zM228 206h1v2h-1zM229 208h1v1h-1zM230 208h1v2h-1zM231 209h1v1h-1zM232 209h1v2h-1zM233 211h1v1h-1zM234 211h1v2h-1zM235 213h1v1h-1zM236 213h1v2h-1zM237 215h1v1h-1zM238 215h1v2h-1zM239 217h1v1h-1zM240 217h1v2h-1zM241 219h1v1h-1zM242 219h1v2h-1zM243 221h1v1h-1zM244 221h1v3h-1zM245 224h1v1h-1zM246 224h1v2h-1zM247 226h1v1h-1zM248 226h1v2h-1zM249 228h1v1h-1zM250 228h1v3h-1zM251 231h1v1h-1zM252 231h1v2h-1zM253 233h1v1h-1zM254 233h1v3h-1zM255 236h1v1h-1zM256 236h1v2h-1zM257 238h1v1h-1zM258 238h1v3h-1zM259 241h1v1h-1zM260 241h1v2h-1zM261 243h1v2h-1zM262 244h1v2h-1zM263 246h1v1h-1zM264 246h1v3h-1zM265 249h1v1h-1zM266 249h1v2h-1zM267 251h1v2h-1zM268 252h1v2h-1zM269 254h1v1h-1zM270 254h1v3h-1zM271 257h1v1h-1zM272 257h1v2h-1zM273 259h1v2h-1zM274 260h1v2h-1zM275 262h1v1h-1zM276 262h1v2h-1zM277 264h1v2h-1zM278 265h1v2h-1zM279 267h1v1h-1zM280 267h1v3h-1zM281 270h1v1h-1zM282 270h1v2h-1zM283 272h1v1h-1zM284 272h1v2h-1zM285 274h1v2h-1zM286 275h1v2h-1zM287 277h1v1h-1zM288 277h1v2h-1zM289 279h1v1h-1zM290 279h1v2h-1zM291 281h1v1h-1zM292 281h1v2h-1zM293 283h1v1h-1zM294 283h1v2h-1zM295 285h1v1h-1zM296 285h1v2h-1zM297 287h1v1h-1zM298 287h1v2h-1zM299 289h1v1h-1zM300 289h1v2h-1zM301 291h1v1h-1zM302 291h1v2h-1zM303 293h1v1h-1zM304 293h1v1h-1zM305 294h1v1h-1zM306 294h1v2h-1zM307 296h1v1h-1zM308 296h1v1h-1zM309 297h1v1h-1zM310 297h1v1h-1zM311 298h1v1h-1zM312 298h1v2h-1zM313 299h1v1h-1zM314 299h1v2h-1zM315 300h1v1h-1zM316 300h1v1h-1zM317 301h1v1h-1zM318 301h1v1h-1zM319 302h1v1h-1zM320 302h1v1h-1zM321 302h1v1h-1zM322 302h1v1h-1zM323 302h1v1h-1zM324 302h1v2h-1zM325 303h1v1h-1zM326 303h1v1h-1zM327 303h1v1h-1zM328 303h1v1h-1zM329 303h1v1h-1zM330 303h1v1h-1zM331 303h1v1h-1zM332 303h1v1h-1zM333 303h1v1h-1zM334 302h1v2h-1zM335 302h1v1h-1zM336 302h1v1h-1zM337 302h1v1h-1zM338 301h1v2h-1zM339 301h1v1h-1zM340 301h1v1h-1zM341 300h1v1h-1zM342 300h1v1h-1zM343 299h1v1h-1zM344 299h1v1h-1zM345 298h1v1h-1zM346 298h1v1h-1zM347 297h1v1h-1zM348 296h1v2h-1zM349 296h1v1h-1zM350 295h1v2h-1zM351 294h1v1h-1zM352 294h1v1h-1zM353 293h1v1h-1zM354 292h1v2h-1zM355 291h1v1h-1zM356 290h1v2h-1zM357 289h1v1h-1zM358 288h1v2h-1zM359 287h1v1h-1zM360 286h1v2h-1zM361 285h1v1h-1zM362 284h1v2h-1zM363 283h1v1h-1zM364 282h1v2h-1zM365 281h1v1h-1zM366 280h1v2h-1zM367 278h1v2h-1zM368 277h1v2h-1zM369 276h1v1h-1zM370 275h1v2h-1zM371 274h1v1h-1zM372 272h1v3h-1zM373 271h1v1h-1zM374 270h1v2h-1zM375 268h1v2h-1zM376 267h1v2h-1zM377 266h1v1h-1zM378 265h1v2h-1zM379 263h1v2h-1zM380 262h1v2h-1zM381 261h1v1h-1zM382 259h1v3h-1zM383 258h1v1h-1zM384 257h1v2h-1zM385 255h1v2h-1zM386 254h1v2h-1zM387 252h1v2h-1zM388 251h1v2h-1zM389 250h1v1h-1zM390 248h1v3h-1zM391 247h1v1h-1zM392 246h1v2h-1zM393 245h1v1h-1zM394 243h1v3h-1zM395 242h1v1h-1zM396 241h1v2h-1zM397 239h1v2h-1zM398 238h1v2h-1zM399 237h1v1h-1zM400 236h1v2h-1zM401 234h1v2h-1zM402 233h1v2h-1zM403 232h1v1h-1zM404 231h1v2h-1zM405 229h1v2h-1zM406 228h1v2h-1zM407 227h1v1h-1zM408 226h1v2h-1zM409 225h1v1h-1zM410 224h1v2h-1zM411 223h1v1h-1zM412 222h1v2h-1zM413 221h1v1h-1zM414 220h1v2h-1zM415 219h1v1h-1zM416 218h1v2h-1zM417 217h1v1h-1zM418 216h1v2h-1zM419 215h1v1h-1zM420 214h1v2h-1zM421 213h1v1h-1zM422 212h1v2h-1zM423 211h1v1h-1zM424 210h1v2h-1zM425 209h1v1h-1zM426 209h1v1h-1zM427 208h1v1h-1zM428 207h1v2h-1zM429 206h1v1h-1zM430 206h1v1h-1zM431 205h1v1h-1zM432 204h1v2h-1zM433 204h1v1h-1zM434 203h1v2h-1zM435 203h1v1h-1zM436 202h1v2h-1zM437 202h1v1h-1zM438 201h1v2h-1zM439 201h1v1h-1zM440 200h1v2h-1zM441 200h1v1h-1zM442 199h1v2h-1zM443 199h1v1h-1zM444 199h1v1h-1zM445 198h1v1h-1zM446 198h1v1h-1zM447 198h1v1h-1zM448 198h1v1h-1zM449 197h1v1h-1zM450 197h1v1h-1zM451 197h1v1h-1zM452 197h1v1h-1zM453 197h1v1h-1zM454 197h1v1h-1zM455 197h1v1h-1zM456 197h1v1h-1zM457 197h1v1h-1zM458 197h1v1h-1zM459 197h1v1h-1zM460 197h1v2h-1zM461 198h1v1h-1zM462 198h1v1h-1zM463 198h1v1h-1zM464 198h1v2h-1zM465 199h1v1h-1zM466 199h1v1h-1zM467 200h1v1h-1zM468 200h1v1h-1zM469 201h1v1h-1zM470 201h1v1h-1zM471 202h1v1h-1zM472 202h1v1h-1zM473 203h1v1h-1zM474 203h1v2h-1zM475 204h1v1h-1zM476 204h1v2h-1zM477 206h1v1h-1zM478 206h1v1h-1zM479 207h1v1h-1zM480 207h1v2h-1zM481 209h1v1h-1zM482 209h1v1h-1zM483 210h1v1h-1zM484 210h1v2h-1zM485 212h1v1h-1zM486 212h1v2h-1zM487 214h1v1h-1zM488 214h1v2h-1zM489 216h1v1h-1zM490 216h1v2h-1zM491 218h1v1h-1zM492 218h1v2h-1zM493 220h1v1h-1zM494 220h1v2h-1zM495 222h1v2h-1zM496 223h1v2h-1zM497 225h1v1h-1zM498 225h1v2h-1zM499 227h1v1h-1zM500 227h1v2h-1zM501 229h1v2h-1zM502 230h1v2h-1zM503 232h1v1h-1zM504 232h1v2h-1zM505 234h1v2h-1zM506 235h1v2h-1zM507 237h1v1h-1zM508 237h1v2h-1zM509 239h1v2h-1zM510 240h1v2h-1zM511 242h1v1h-1zM512 242h1v3h-1zM513 245h1v1h-1zM514 245h1v2h-1zM515 247h1v2h-1zM516 248h1v2h-1zM517 250h1v1h-1zM518 250h1v3h-1zM519 253h1v1h-1zM520 253h1v2h-1zM521 255h1v2h-1zM522 256h1v2h-1zM523 258h1v1h-1zM524 258h1v3h-1zM525 261h1v1h-1zM526 261h1v2h-1zM527 263h1v1h-1zM528 263h1v3h-1zM529 266h1v1h-1zM530 266h1v2h-1zM531 268h1v2h-1zM532 269h1v2h-1zM533 271h1v1h-1zM534 271h1v2h-1zM535 273h1v1h-1zM536 273h1v3h-1zM537 276h1v1h-1zM538 276h1v2h-1zM539 278h1v1h-1zM540 278h1v2h-1zM541 280h1v1h-1zM542 280h1v2h-1zM543 282h1v1h-1zM544 282h1v2h-1zM545 284h1v1h-1zM546 284h1v2h-1zM547 286h1v1h-1zM548 286h1v2h-1zM549 288h1v1h-1zM550 288h1v2h-1zM551 290h1v1h-1zM552 290h1v2h-1zM553 292h1v1h-1zM554 292h1v2h-1zM555 293h1v1h-1zM556 293h1v2h-1zM557 295h1v1h-1zM558 295h1v2h-1zM559 296h1v1h-1zM560 296h1v2h-1zM561 297h1v1h-1zM562 297h1v2h-1zM563 299h1v1h-1zM564 299h1v1h-1zM565 300h1v1h-1zM566 300h1v1h-1zM567 300h1v1h-1zM568 300h1v2h-1zM569 301h1v1h-1zM570 301h1v2h-1zM571 302h1v1h-1zM572 302h1v1h-1zM573 302h1v1h-1zM574 302h1v1h-1zM575 303h1v1h-1zM576 303h1v1h-1zM577 303h1v1h-1zM578 303h1v1h-1zM579 303h1v1h-1zM580 303h1v1h-1zM581 303h1v1h-1zM582 303h1v1h-1zM583 303h1v1h-1zM584 303h1v1h-1zM585 302h1v1h-1zM586 302h1v1h-1zM587 302h1v1h-1zM588 302h1v1h-1zM589 301h1v1h-1zM590 301h1v1h-1zM591 301h1v1h-1zM592 300h1v2h-1zM593 300h1v1h-1zM594 299h1v2h-1zM595 299h1v1h-1zM596 298h1v2h-1zM597 298h1v1h-1zM598 297h1v2h-1zM599 296h1v1h-1zM600 296h1v1h-1zM601 295h1v1h-1zM602 294h1v2h-1zM603 294h1v1h-1zM604 293h1v2h-1zM605 292h1v1h-1zM606 291h1v2h-1zM607 290h1v1h-1zM608 289h1v2h-1zM609 288h1v1h-1zM610 287h1v2h-1zM611 286h1v1h-1zM612 285h1v2h-1zM613 284h1v1h-1zM614 283h1v2h-1zM615 282h1v1h-1zM616 281h1v2h-1zM617 280h1v1h-1zM618 278h1v3h-1zM619 277h1v1h-1zM620 276h1v2h-1zM621 275h1v1h-1zM622 274h1v2h-1zM623 272h1v2h-1zM624 271h1v2h-1zM625 270h1v1h-1zM626 268h1v3h-1zM627 267h1v1h-1zM628 266h1v2h-1zM629 265h1v1h-1zM630 263h1v3h-1zM631 262h1v1h-1zM632 261h1v2h-1zM633 259h1v2h-1zM634 258h1v2h-1zM635 257h1v1h-1zM636 255h1v3h-1zM637 254h1v1h-1zM638 252h1v3h-1zM639 251h1v1h-1zM640 250h1v2h-1zM641 248h1v2h-1zM642 247h1v2h-1zM643 246h1v1h-1zM644 245h1v2h-1zM645 243h1v2h-1zM646 242h1v2h-1zM647 241h1v1h-1zM648 239h1v3h-1zM649 238h1v1h-1zM650 237h1v2h-1zM651 236h1v1h-1zM652 234h1v3h-1zM653 233h1v1h-1zM654 232h1v2h-1zM655 231h1v1h-1zM656 229h1v3h-1zM657 228h1v1h-1zM658 227h1v2h-1zM659 226h1v1h-1zM660 225h1v2h-1zM661 224h1v1h-1zM662 223h1v2h-1zM663 222h1v1h-1zM664 221h1v2h-1zM665 220h1v1h-1zM666 219h1v2h-1zM667 218h1v1h-1zM668 217h1v2h-1zM669 216h1v1h-1zM670 215h1v2h-1zM671 214h1v1h-1zM672 213h1v2h-1zM673 212h1v1h-1zM674 211h1v2h-1zM675 210h1v1h-1zM676 209h1v2h-1zM677 209h1v1h-1zM678 208h1v2h-1zM679 207h1v1h-1zM680 206h1v2h-1zM681 206h1v1h-1zM682 205h1v2h-1zM683 204h1v1h-1zM684 204h1v1h-1zM685 203h1v1h-1zM686 203h1v1h-1zM687 202h1v1h-1zM688 202h1v1h-1zM689 201h1v1h-1zM690 201h1v1h-1zM691 200h1v1h-1zM692 200h1v1h-1zM693 199h1v1h-1zM694 199h1v1h-1zM695 199h1v1h-1zM696 198h1v2h-1zM697 198h1v1h-1zM698 198h1v1h-1z"/>
<path fill="#ffff00" d="M77 508h1v1h-1zM78 508h1v1h-1zM79 508h1v1h-1zM80 508h1v1h-1zM81 508h1v1h-1zM82 508h1v1h-1zM83 507h1v1h-1zM84 507h1v1h-1zM85 507h1v1h-1zM86 507h1v1h-1zM87 506h1v1h-1zM88 506h1v1h-1zM89 506h1v1h-1zM90 505h1v2h-1zM91 505h1v1h-1zM92 504h1v2h-1zM93 504h1v1h-1zM94 503h1v2h-1zM95 503h1v1h-1zM96 502h1v2h-1zM97 501h1v1h-1zM98 501h1v1h-1zM99 500h1v1h-1zM100 499h1v2h-1zM101 498h1v1h-1zM102 498h1v1h-1zM103 497h1v1h-1zM104 496h1v2h-1zM105 495h1v1h-1zM106 494h1v2h-1zM107 493h1v1h-1zM108 492h1v2h-1zM109 491h1v1h-1zM110 490h1v2h-1zM111 489h1v1h-1zM112 488h1v2h-1zM113 487h1v1h-1zM114 485h1v3h-1zM115 484h1v1h-1zM116 483h1v2h-1zM117 482h1v1h-1zM118 481h1v2h-1zM119 480h1v1h-1zM120 478h1v3h-1zM121 477h1v1h-1zM122 476h1v2h-1zM123 474h1v2h-1zM124 473h1v2h-1zM125 472h1v1h-1zM126 470h1v3h-1zM127 469h1v1h-1zM128 468h1v2h-1zM129 466h1v2h-1zM130 465h1v2h-1zM131 464h1v1h-1zM132 462h1v3h-1zM133 461h1v1h-1zM134 460h1v2h-1zM135 458h1v2h-1zM136 457h1v2h-1zM137 456h1v1h-1zM138 454h1v3h-1zM139 453h1v1h-1zM140 452h1v2h-1zM141 450h1v2h-1zM142 449h1v2h-1zM143 448h1v1h-1zM144 446h1v3h-1zM145 445h1v1h-1zM146 444h1v2h-1zM147 442h1v2h-1zM148 441h1v2h-1zM149 440h1v1h-1zM150 438h1v3h-1zM151 437h1v1h-1zM152 436h1v2h-1zM153 435h1v1h-1zM154 433h1v3h-1zM155 432h1v1h-1zM156 431h1v2h-1zM157 430h1v1h-1zM158 429h1v2h-1zM159 428h1v1h-1zM160 426h1v3h-1zM161 425h1v1h-1zM162 424h1v2h-1zM163 423h1v1h-1zM164 422h1v2h-1zM165 421h1v1h-1zM166 420h1v2h-1zM167 419h1v1h-1zM168 418h1v2h-1zM169 417h1v1h-1zM170 416h1v2h-1zM171 415h1v1h-1zM172 414h1v2h-1zM173 414h1v1h-1zM174 413h1v2h-1zM175 412h1v1h-1zM176 411h1v2h-1zM177 410h1v1h-1zM178 410h1v1h-1zM179 409h1v1h-1zM180 408h1v2h-1zM181 407h1v1h-1zM182 407h1v1h-1zM183 406h1v1h-1zM184 405h1v2h-1zM185 405h1v1h-1zM186 404h1v2h-1zM187 404h1v1h-1zM188 403h1v2h-1zM189 403h1v1h-1zM190 402h1v2h-1zM191 402h1v1h-1zM192 402h1v1h-1zM193 401h1v1h-1zM194 401h1v1h-1zM195 401h1v1h-1zM196 400h1v2h-1zM197 400h1v1h-1zM198 400h1v1h-1zM199 400h1v1h-1zM200 400h1v1h-1zM201 400h1v1h-1zM202 400h1v1h-1zM203 400h1v1h-1zM204 400h1v1h-1zM205 400h1v1h-1zM206 400h1v1h-1zM207 400h1v1h-1zM208 400h1v1h-1zM209 400h1v1h-1zM210 400h1v1h-1zM211 400h1v1h-1zM212 400h1v2h-1zM213 401h1v1h-1zM214 401h1v1h-1zM215 402h1v1h-1zM216 402h1v1h-1zM217 403h1v1h-1zM218 403h1v1h-1zM219 403h1v1h-1zM220 403h1v2h-1zM221 405h1v1h-1zM222 405h1v1h-1zM223 406h1v1h-1zM224 406h1v1h-1zM225 407h1v1h-1zM226 407h1v2h-1zM227 409h1v1h-1zM228 409h1v1h-1zM229 410h1v1h-1zM230 410h1v2h-1zM231 412h1v1h-1zM232 412h1v2h-1zM233 413h1v1h-1zM234 413h1v2h-1zM235 415h1v1h-1zM236 415h1v2h-1zM237 417h1v1h-1zM238 417h1v2h-1zM239 419h1v1h-1zM240 419h1v2h-1zM241 421h1v1h-1zM242 421h1v3h-1zM243 424h1v1h-1zM244 424h1v2h-1zM245 426h1v1h-1zM246 426h1v2h-1zM247 428h1v1h-1zM248 428h1v2h-1zM249 430h1v2h-1zM250 431h1v2h-1zM251 433h1v1h-1zM252 433h1v2h-1zM253 435h1v2h-1zM254 436h1v2h-1zM255 438h1v1h-1zM256 438h1v3h-1zM257 441h1v1h-1zM258 441h1v2h-1zM259 443h1v2h-1zM260 444h1v2h-1zM261 446h1v1h-1zM262 446h1v3h-1zM263 449h1v1h-1zM264 449h1v2h-1zM265 451h1v2h-1zM266 452h1v2h-1zM267 454h1v1h-1zM268 454h1v3h-1zM269 457h1v1h-1zM270 457h1v2h-1zM271 459h1v2h-1zM272 460h1v2h-1zM273 462h1v1h-1zM274 462h1v3h-1zM275 465h1v1h-1zM276 465h1v2h-1zM277 467h1v2h-1zM278 468h1v2h-1zM279 470h1v1h-1zM280 470h1v2h-1zM281 472h1v2h-1zM282 473h1v2h-1zM283 475h1v1h-1zM284 475h1v2h-1zM285 477h1v2h-1zM286 478h1v2h-1zM287 480h1v1h-1zM288 480h1v2h-1zM289 482h1v1h-1zM290 482h1v3h-1zM291 485h1v1h-1zM292 485h1v2h-1zM293 487h1v1h-1zM294 487h1v2h-1zM295 489h1v1h-1zM296 489h1v2h-1zM297 491h1v1h-1zM298 491h1v2h-1zM299 493h1v1h-1zM300 493h1v2h-1zM301 495h1v1h-1zM302 495h1v2h-1zM303 496h1v1h-1zM304 496h1v2h-1zM305 498h1v1h-1zM306 498h1v2h-1zM307 500h1v1h-1zM308 500h1v1h-1zM309 501h1v1h-1zM310 501h1v2h-1zM311 502h1v1h-1zM312 502h1v2h-1zM313 503h1v1h-1zM314 503h1v2h-1zM315 504h1v1h-1zM316 504h1v2h-1zM317 505h1v1h-1zM318 505h1v2h-1zM319 506h1v1h-1zM320 506h1v1h-1zM321 507h1v1h-1zM322 507h1v1h-1zM323 507h1v1h-1zM324 507h1v1h-1zM325 508h1v1h-1zM326 508h1v1h-1zM327 508h1v1h-1zM328 508h1v1h-1zM329 508h1v1h-1zM330 508h1v1h-1zM331 508h1v1h-1zM332 508h1v1h-1zM333 508h1v1h-1zM334 508h1v1h-1zM335 508h1v1h-1zM336 507h1v2h-1zM337 507h1v1h-1zM338 507h1v1h-1zM339 507h1v1h-1zM340 506h1v2h-1zM341 506h1v1h-1zM342 505h1v2h-1zM343 505h1v1h-1zM344 505h1v1h-1zM345 504h1v1h-1zM346 503h1v2h-1zM347 503h1v1h-1zM348 502h1v2h-1zM349 502h1v1h-1zM350 501h1v2h-1zM351 500h1v1h-1zM352 499h1v2h-1zM353 499h1v1h-1zM354 498h1v2h-1zM355 497h1v1h-1zM356 496h1v2h-1zM357 495h1v1h-1zM358 494h1v2h-1zM359 493h1v1h-1zM360 492h1v2h-1zM361 491h1v1h-1zM362 490h1v2h-1zM363 489h1v1h-1zM364 488h1v2h-1zM365 487h1v1h-1zM366 486h1v2h-1zM367 485h1v1h-1zM368 484h1v2h-1zM369 483h1v1h-1zM370 481h1v3h-1zM371 480h1v1h-1zM372 479h1v2h-1zM373 478h1v1h-1zM374 476h1v3h-1zM375 475h1v1h-1zM376 474h1v2h-1zM377 472h1v2h-1zM378 471h1v2h-1zM379 470h1v1h-1zM380 468h1v3h-1zM381 467h1v1h-1zM382 466h1v2h-1zM383 464h1v2h-1zM384 463h1v2h-1zM385 462h1v1h-1zM386 460h1v3h-1zM387 459h1v1h-1zM388 458h1v2h-1zM389 456h1v2h-1zM390 455h1v2h-1zM391 454h1v1h-1zM392 452h1v3h-1zM393 451h1v1h-1zM394 450h1v2h-1zM395 448h1v2h-1zM396 447h1v2h-1zM397 446h1v1h-1zM398 444h1v3h-1zM399 443h1v1h-1zM400 442h1v2h-1zM401 440h1v2h-1zM402 439h1v2h-1zM403 438h1v1h-1zM404 437h1v2h-1zM405 435h1v2h-1zM406 434h1v2h-1zM407 433h1v1h-1zM408 432h1v2h-1zM409 430h1v2h-1zM410 429h1v2h-1zM411 428h1v1h-1zM412 427h1v2h-1zM413 426h1v1h-1zM414 425h1v2h-1zM415 424h1v1h-1zM416 423h1v2h-1zM417 422h1v1h-1zM418 421h1v2h-1zM419 420h1v1h-1zM420 419h1v2h-1zM421 418h1v1h-1zM422 417h1v2h-1zM423 416h1v1h-1zM424 415h1v2h-1zM425 414h1v1h-1zM426 413h1v2h-1zM427 412h1v1h-1zM428 411h1v2h-1zM429 411h1v1h-1zM430 410h1v2h-1zM431 409h1v1h-1zM432 408h1v2h-1zM433 408h1v1h-1zM434 407h1v2h-1zM435 406h1v1h-1zM436 406h1v1h-1zM437 405h1v1h-1zM438 405h1v1h-1zM439 404h1v1h-1zM440 404h1v1h-1zM441 403h1v1h-1zM442 403h1v1h-1zM443 402h1v1h-1zM444 402h1v1h-1zM445 401h1v1h-1zM446 401h1v1h-1zM447 401h1v1h-1zM448 401h1v1h-1zM449 400h1v1h-1zM450 400h1v1h-1zM451 400h1v1h-1zM452 400h1v1h-1zM453 400h1v1h-1zM454 400h1v1h-1zM455 400h1v1h-1zM456 400h1v1h-1zM457 400h1v1h-1zM458 400h1v1h-1zM459 400h1v1h-1zM460 400h1v1h-1zM461 400h1v1h-1zM462 400h1v1h-1zM463 400h1v1h-1zM464 400h1v2h-1zM465 401h1v1h-1zM466 401h1v1h-1zM467 402h1v1h-1zM468 402h1v1h-1zM469 402h1v1h-1zM470 402h1v2h-1zM471 403h1v1h-1zM472 403h1v2h-1zM473 404h1v1h-1zM474 404h1v2h-1zM475 405h1v1h-1zM476 405h1v2h-1zM477 407h1v1h-1zM478 407h1v1h-1zM479 408h1v1h-1zM480 408h1v2h-1zM481 410h1v1h-1zM482 410h1v1h-1zM483 411h1v1h-1zM484 411h1v2h-1zM485 413h1v1h-1zM486 413h1v2h-1zM487 415h1v1h-1zM488 415h1v2h-1zM489 417h1v1h-1zM490 417h1v2h-1zM491 419h1v1h-1zM492 419h1v2h-1zM493 421h1v1h-1zM494 421h1v2h-1zM495 423h1v1h-1zM496 423h1v2h-1zM497 425h1v1h-1zM498 425h1v3h-1zM499 428h1v1h-1zM500 428h1v2h-1zM501 430h1v1h-1zM502 430h1v2h-1zM503 432h1v2h-1zM504 433h1v2h-1zM505 435h1v1h-1zM506 435h1v2h-1zM507 437h1v2h-1zM508 438h1v2h-1zM509 440h1v1h-1zM510 440h1v3h-1zM511 443h1v1h-1zM512 443h1v2h-1zM513 445h1v2h-1zM514 446h1v2h-1zM515 448h1v1h-1zM516 448h1v3h-1zM517 451h1v1h-1zM518 451h1v2h-1zM519 453h1v2h-1zM520 454h1v2h-1zM521 456h1v1h-1zM522 456h1v3h-1zM523 459h1v1h-1zM524 459h1v2h-1zM525 461h1v2h-1zM526 462h1v2h-1zM527 464h1v1h-1zM528 464h1v3h-1zM529 467h1v1h-1zM530 467h1v2h-1zM531 469h1v2h-1zM532 470h1v2h-1zM533 472h1v1h-1zM534 472h1v2h-1zM535 474h1v2h-1zM536 475h1v2h-1zM537 477h1v1h-1zM538 477h1v2h-1zM539 479h1v1h-1zM540 479h1v3h-1zM541 482h1v1h-1zM542 482h1v2h-1zM543 484h1v1h-1zM544 484h1v2h-1zM545 486h1v1h-1zM546 486h1v2h-1zM547 488h1v1h-1zM548 488h1v2h-1zM549 490h1v1h-1zM550 490h1v2h-1zM551 492h1v1h-1zM552 492h1v2h-1zM553 494h1v1h-1zM554 494h1v2h-1zM555 496h1v1h-1zM556 496h1v2h-1zM557 498h1v1h-1zM558 498h1v1h-1zM559 499h1v1h-1zM560 499h1v2h-1zM561 501h1v1h-1zM562 501h1v1h-1zM563 502h1v1h-1zM564 502h1v2h-1zM565 503h1v1h-1zM566 503h1v2h-1zM567 504h1v1h-1zM568 504h1v2h-1zM569 505h1v1h-1zM570 505h1v1h-1zM571 506h1v1h-1zM572 506h1v1h-1zM573 507h1v1h-1zM574 507h1v1h-1zM575 507h1v1h-1zM576 507h1v1h-1zM577 508h1v1h-1zM578 508h1v1h-1zM579 508h1v1h-1zM580 508h1v1h-1zM581 508h1v1h-1zM582 508h1v1h-1zM583 508h1v1h-1zM584 508h1v1h-1zM585 508h1v1h-1zM586 508h1v1h-1zM587 508h1v1h-1zM588 507h1v2h-1zM589 507h1v1h-1zM590 507h1v1h-1zM591 507h1v1h-1zM592 506h1v2h-1zM593 506h1v1h-1zM594 506h1v1h-1zM595 505h1v1h-1zM596 505h1v1h-1zM597 504h1v1h-1zM598 504h1v1h-1zM599 503h1v1h-1zM600 503h1v1h-1zM601 502h1v1h-1zM602 501h1v2h-1zM603 501h1v1h-1zM604 500h1v2h-1zM605 499h1v1h-1zM606 498h1v2h-1zM607 498h1v1h-1zM608 497h1v2h-1zM609 496h1v1h-1zM610 495h1v2h-1zM611 494h1v1h-1zM612 493h1v2h-1zM613 492h1v1h-1zM614 491h1v2h-1zM615 490h1v1h-1zM616 489h1v2h-1zM617 488h1v1h-1zM618 487h1v2h-1zM619 485h1v2h-1zM620 484h1v2h-1zM621 483h1v1h-1zM622 482h1v2h-1zM623 481h1v1h-1zM624 480h1v2h-1zM625 478h1v2h-1zM626 477h1v2h-1zM627 476h1v1h-1zM628 474h1v3h-1zM629 473h1v1h-1zM630 472h1v2h-1zM631 470h1v2h-1zM632 469h1v2h-1zM633 468h1v1h-1zM634 466h1v3h-1zM635 465h1v1h-1zM636 464h1v2h-1zM637 462h1v2h-1zM638 461h1v2h-1zM639 460h1v1h-1zM640 458h1v3h-1zM641 457h1v1h-1zM642 456h1v2h-1zM643 454h1v2h-1zM644 453h1v2h-1zM645 452h1v1h-1zM646 450h1v3h-1zM647 449h1v1h-1zM648 448h1v2h-1zM649 446h1v2h-1zM650 445h1v2h-1zM651 444h1v1h-1zM652 442h1v3h-1zM653 441h1v1h-1zM654 440h1v2h-1zM655 438h1v2h-1zM656 437h1v2h-1zM657 436h1v1h-1zM658 435h1v2h-1zM659 433h1v2h-1zM660 432h1v2h-1zM661 431h1v1h-1zM662 430h1v2h-1zM663 429h1v1h-1zM664 428h1v2h-1zM665 426h1v2h-1zM666 425h1v2h-1zM667 424h1v1h-1zM668 423h1v2h-1zM669 422h1v1h-1zM670 421h1v2h-1zM671 420h1v1h-1zM672 419h1v2h-1zM673 418h1v1h-1zM674 417h1v2h-1zM675 416h1v1h-1zM676 415h1v2h-1zM677 414h1v1h-1zM678 414h1v1h-1zM679 413h1v1h-1zM680 412h1v2h-1zM681 411h1v1h-1zM682 410h1v2h-1zM683 410h1v1h-1zM684 409h1v2h-1zM685 408h1v1h-1zM686 407h1v2h-1zM687 407h1v1h-1zM688 406h1v2h-1zM689 405h1v1h-1zM690 405h1v1h-1zM691 404h1v1h-1zM692 404h1v1h-1zM693 403h1v1h-1zM694 403h1v1h-1zM695 402h1v1h-1zM696 402h1v1h-1zM697 402h1v1h-1zM698 401h1v2h-1z"/>
</svg>

<!-- bottom bar -->
<div class="combo" style="left:49px;top:582px;width:81px;height:24px"></div>
<div class="a" style="left:52px;top:585px;width:57px;height:18px;background:#0a246a;border:1px dotted #ffe060"></div>
<div class="t" style="left:54px;top:587px;font-size:14px;color:#fff">0.2 mS</div>
<div class="dd" style="left:111px;top:584px;width:17px;height:20px"></div>
<div class="combo" style="left:130px;top:582px;width:81px;height:24px"></div>
<div class="t" style="left:133px;top:587px;font-size:14px;color:#787878;transform:scaleX(0.93);transform-origin:0 0">5MS/s</div>
<div class="combo" style="left:211px;top:582px;width:79px;height:24px"></div>
<div class="t" style="left:214px;top:587px;font-size:14px;color:#fff">Min</div>
<div class="dd" style="left:271px;top:584px;width:17px;height:20px"></div>
<div class="btn" style="left:291px;top:582px;width:49px;height:22px"></div>
<svg class="a" style="left:308px;top:585px" width="13" height="15" viewBox="0 0 13 15"><path d="M7.5 1H9.5L3 7.5L9.5 14H7.5L1 7.5Z" fill="#000080"/><path d="M12.3 1V14L5.3 7.5Z" fill="#000080"/></svg>
<div class="a sunk" style="left:340px;top:582px;width:96px;height:23px;background:#000;box-shadow:inset 1px 1px 0 #404040"></div>
<div class="t" style="left:374px;top:587px;font-size:14px;color:#a0a0a0">50%</div>
<div class="btn" style="left:436px;top:582px;width:48px;height:22px"></div>
<svg class="a" style="left:455px;top:585px" width="13" height="15" viewBox="0 0 13 15"><path d="M5.5 1H3.5L10 7.5L3.5 14H5.5L12 7.5Z" fill="#000080"/><path d="M0.7 1V14L7.7 7.5Z" fill="#000080"/></svg>
<!-- slider -->
<div class="a" style="left:494px;top:587px;width:104px;height:3px;background:#000"></div>
<div class="a" style="left:494px;top:590px;width:104px;height:1px;background:#404040"></div>
<div class="a" style="left:491px;top:597px;width:103px;height:1px;background:#404040"></div>
<div class="a" style="left:491px;top:598px;width:103px;height:1px;background:#808080"></div>
<div class="a" style="left:491px;top:599px;width:103px;height:1px;background:#fff"></div>
<div class="a" style="left:598px;top:594px;width:1px;height:8px;background:#000"></div>
<div class="a sunk" style="left:606px;top:583px;width:95px;height:22px;background:#000"></div>
<div class="t" style="left:610px;top:586px;font-size:14px;color:#b4b4b4">Active</div>
<div class="a" style="left:706px;top:582px;width:22px;height:22px;background:#d4d0c8;border-top:1px solid #fff;border-left:1px solid #fff;border-right:1px solid #404040;border-bottom:1px solid #404040"></div>
<svg class="a" style="left:707px;top:583px" width="20" height="20" viewBox="0 0 20 20">
<rect width="20" height="20" fill="#98bce8"/>
<circle cx="10" cy="10" r="8.5" fill="#b8d4f4" stroke="#e8f2ff" stroke-width="1"/>
<circle cx="10" cy="10" r="5.5" fill="none" stroke="#6890c8" stroke-width="1"/>
<path d="M3 12Q10 18 17 11" stroke="#305090" fill="none" stroke-width="1"/>
<path d="M2 7H9M5 5V11M3 11H9M11 6H17M14 5V15M10 15H18" stroke="#203870" stroke-width="1.5"/>
</svg>
<!-- watermark -->
<div class="t" style="left:580px;top:567px;font-size:31px;color:rgba(230,230,230,0.15);-webkit-text-stroke:1px rgba(70,70,70,0.65);letter-spacing:-2px">hao</div>
<div class="t" style="left:626px;top:567px;font-size:31px;color:rgba(230,230,230,0.15);-webkit-text-stroke:1px rgba(70,70,70,0.65)">D</div>
<svg class="a" style="left:646px;top:568px" width="24" height="26" viewBox="0 0 24 26" fill="none" stroke="rgba(90,90,90,0.5)" stroke-width="1.2">
<path d="M6 25L2 12L4 11L8 17L6 3L8.5 2.5L11 15L11 1L13.5 1L14 15L16 3L18.5 3.5L16.5 16L20 9L22 10L17 22L12 25Z" fill="rgba(230,230,230,0.12)"/>
</svg>
<div class="t" style="left:665px;top:567px;font-size:31px;color:rgba(230,230,230,0.15);-webkit-text-stroke:1px rgba(70,70,70,0.65)">Y</div>
<div class="t" style="left:690px;top:588px;font-size:13px;color:rgba(230,230,230,0.15);-webkit-text-stroke:0.6px rgba(90,90,90,0.6)">.net</div>


<!-- measure window -->
<div class="a" style="left:548px;top:0;width:184px;height:141px;background:#d4d0c8;border-left:1px solid #d4d0c8;border-top:1px solid #d4d0c8;border-bottom:1px solid #404040;box-shadow:inset 1px 1px 0 #fff,inset 0 -1px 0 #808080"></div>
<div class="a" style="left:550px;top:1px;width:182px;height:20px;background:linear-gradient(to right,#808080,#c0c0c0 100%)"></div>
<svg class="a" style="left:551px;top:2px" width="18" height="18" viewBox="0 0 18 18">
<rect width="18" height="18" fill="#000"/>
<polyline points="1,5 3.8,2.8 7.2,7 10.7,2.8 14.1,7 17.3,2" fill="none" stroke="#ff0" stroke-width="1.4"/>
<rect x="1" y="8" width="16" height="2" fill="#0ff"/>
<polyline points="1.5,15.5 1.5,11.5 5,11.5 5,15.5 8,15.5 8,11.5 11,11.5 11,15.5 14,15.5 14,11.5 17,11.5" fill="none" stroke="#0f0" stroke-width="1.2"/>
</svg>
<div class="t" style="left:571px;top:3px;font-size:17px;color:#d4d0c8;-webkit-text-stroke:0.3px #d4d0c8;transform:scaleX(1.05);transform-origin:0 0">Measure</div>
<div class="btn" style="left:711px;top:4px;width:18px;height:16px"></div>
<svg class="a" style="left:715px;top:7px" width="10" height="10" viewBox="0 0 10 10"><path d="M1 1L9 9M9 1L1 9" stroke="#000" stroke-width="2"/></svg>
<div class="a" style="left:549px;top:27px;width:182px;height:88px;background:#000;border-top:1px solid #808080;border-left:1px solid #808080;border-right:1px solid #fff;border-bottom:1px solid #fff;box-shadow:inset 1px 1px 0 #404040,inset -1px -1px 0 #d4d0c8"></div>
<div class="t" style="left:552px;top:31px;font-size:12px;color:#00ff00">CH1:P to P =1000.0mV</div>
<div class="t" style="left:552px;top:48px;font-size:12px;color:#00ff00">CH1:Frequency = 1.00kHz</div>
<div class="t" style="left:552px;top:65px;font-size:12px;color:#ffff00">CH2:P to P =10.31V</div>
<div class="t" style="left:552px;top:82px;font-size:12px;color:#ffff00">CH2:Frequency = 1.00kHz</div>
<div class="btn" style="left:557px;top:118px;width:48px;height:17px;border:1px solid #000;box-shadow:inset 1px 1px 0 #fff,inset -1px -1px 0 #404040,inset -2px -2px 0 #808080"></div>
<div class="t" style="left:563px;top:120px;font-size:12px">Delete</div>
<div class="btn" style="left:605px;top:118px;width:72px;height:17px"></div>
<div class="t" style="left:615px;top:120px;font-size:12px">Delete All</div>
<div class="btn" style="left:677px;top:118px;width:49px;height:17px"></div>
<div class="t" style="left:688px;top:120px;font-size:12px">Save</div>

</body></html>
